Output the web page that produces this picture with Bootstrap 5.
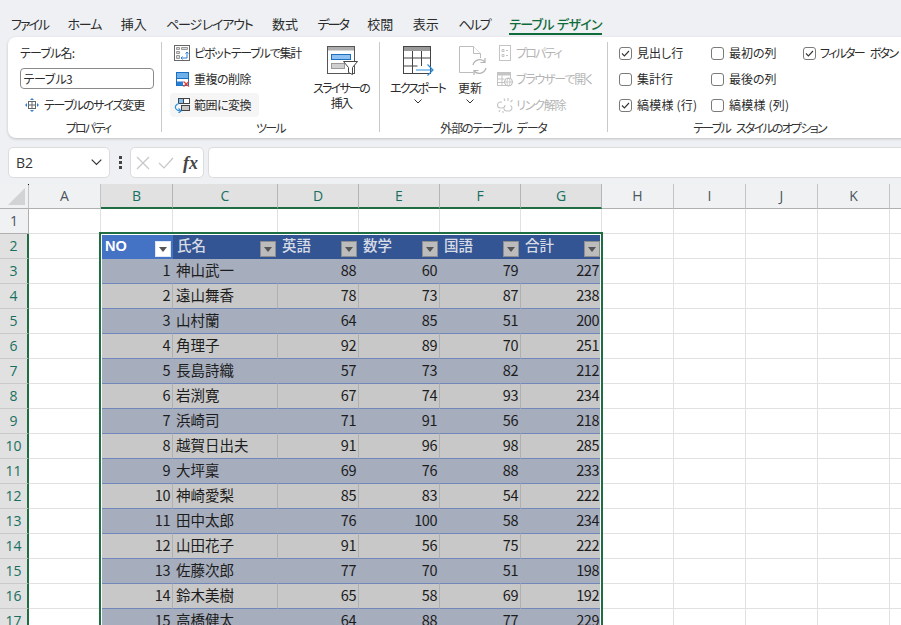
<!DOCTYPE html>
<html lang="ja">
<head>
<meta charset="utf-8">
<title>テーブル デザイン</title>
<link href="https://cdn.jsdelivr.net/npm/bootstrap@5.3.0/dist/css/bootstrap.min.css" rel="stylesheet">
<style>
html,body{height:625px;overflow:hidden}
body{background:#eef0f3;color:#2b2b2b;font-family:"Noto Sans CJK JP","Liberation Sans",sans-serif;font-size:12px;font-feature-settings:"palt";width:901px}
.xs1{letter-spacing:-.5px;word-spacing:3px}.xs2{letter-spacing:-1.2px;word-spacing:4px}.xs3{letter-spacing:-1.75px;word-spacing:5px}.xs4{letter-spacing:-2px}
.xt1{letter-spacing:-1.2px;word-spacing:-1px}.xt2{letter-spacing:-.7px;word-spacing:1px}
.xtabs{height:37px;padding:14px 0 0 11px;gap:19.5px;flex-wrap:nowrap;font-size:13px;line-height:20px}
.xtabs .nav-link{padding:0;color:#2b2b2b;white-space:nowrap;height:20px}
.xtabs .nav-link.active{color:#0e6b3a;font-weight:500;position:relative}
.xtabs .nav-link.active::after{content:"";position:absolute;left:0;right:0;top:19px;height:2px;background:#0e6b3a}
.xribbon{margin-left:8px;width:920px;height:101px;border:0;border-radius:8px;box-shadow:0 1px 3px rgba(0,0,0,.2);flex-direction:row}
.xg{flex:none;display:flex;flex-direction:column}
.xg1{width:153px}.xg2{width:217px}.xg3{width:227px}.xg4{width:300px}
.xgbody{height:82px;padding-top:3px;display:flex}
.xglabel{height:19px;line-height:18px;text-align:center;color:#333}
.xg1 .xglabel{padding-left:7px}
.xg4 .xglabel{width:303px}
.xsep{flex:none;width:1px;height:90px;margin-top:5px;background:#c9c9c9}
.xrow{height:26px;display:flex;align-items:center;gap:4px;white-space:nowrap;line-height:16px}
.xrow svg{flex:none}
.xoffrow{gap:3px}
.xhov{background:#f5f5f5;border-radius:4px;height:24px;margin:1px 0;padding:0 8px 0 4px;align-self:flex-start}
.xoff{color:#b4b4b4;margin-left:7px}
.xg1 .xgbody{flex-direction:column;padding-left:12px}
.xname{height:21px;width:134px;padding:0 2px;font-size:12px;line-height:18px;border:1px solid #8a8a8a;border-radius:4px;color:#2b2b2b;min-height:0;margin:3px 0;font-family:inherit;letter-spacing:-1.1px}
.xlabel1{height:25px;line-height:26px;letter-spacing:-.8px}
.xcol1{width:150px;padding-left:8px}
.xcol2{width:58px}
.xcol3{width:55px}
.xcol4{width:40px;margin-left:5px}
.xg3 .xgbody{padding-left:10px}
.xg4 .xgbody{padding-left:11px}
.xccol{width:92px}
.xbig{display:flex;flex-direction:column;align-items:center;padding-top:6px;line-height:15px;text-align:center;flex:none;white-space:nowrap}
.xbig svg{flex:none;margin-bottom:4px}
.xchev{margin-top:4px}
.xcheck{display:flex;align-items:center;gap:5px;height:26px;margin:0;padding:0;min-height:0;white-space:nowrap}
.xcheck .form-check-input{float:none;margin:0;width:13px;height:13px;flex:none;border:1px solid #7a7a7a;border-radius:3px;background-color:#fff}
.xcheck .form-check-input:checked{background-color:#fff;border-color:#7a7a7a;background-image:url("data:image/svg+xml,%3Csvg xmlns='http://www.w3.org/2000/svg' viewBox='0 0 13 13'%3E%3Cpath d='M3 6.5l2.4 2.4L10 4' fill='none' stroke='%23333' stroke-width='1.1'/%3E%3C/svg%3E");background-size:13px 13px}
.xwide{letter-spacing:.2px}
.xfbar{height:31px;margin:9px 0 6px 8px}
.xbox{background:#fff;border:1px solid #dcdcdc;border-radius:5px;height:31px;flex:none}
.xnamebox{width:102px;padding:0 7px;font-family:"Open Sans","Liberation Sans",sans-serif;font-size:14px;color:#333;line-height:29px}
.xdots{width:20px;flex:none}
.xfx{width:74px;padding:0 5px}
.xfxt{font-family:"Liberation Serif",serif;font-style:italic;font-weight:700;font-size:18px;color:#444;line-height:28px;margin-left:auto}
.xinput{width:720px;border-right:0;margin-left:4px}
.xsheetwrap{position:relative;height:441px;overflow:hidden;background:#fff}
.xsheet{table-layout:fixed;border-collapse:separate;border-spacing:0;width:962px;font-size:14.5px;line-height:20px}
.xsheet td,.xsheet th{height:25px;padding:0;border-right:1px solid #e1e1e1;border-bottom:1px solid #e1e1e1;font-weight:400;overflow:hidden;white-space:nowrap}
.xsheet thead th,.xsheet tbody th{background:#f0f1f2;text-align:center;font-family:"Open Sans","Liberation Sans",sans-serif;font-size:14px;color:#4a5560;border-right-color:#d0d0d0;border-bottom-color:#c9c9c9}
.xsheet thead th{border-bottom-color:#b0b0b0;border-right-color:#c4c4c4}
.xsheet thead th.xsel{background:#e1e1e1;color:#17705f;border-bottom:2px solid #1f6e43;border-right-color:#b5b5b5}
.xsheet tbody th.xsel{background:#e1e1e1;color:#17705f;border-right:2px solid #1f6e43}
.xsheet tbody tr:first-child th{border-bottom-color:#b0b0b0}
.xsheet tbody th{border-right-color:#b0b0b0}
.xsheet .xhead{background:#335593;color:#d6dbe6;font-weight:500;padding:0 0 2px 4px;position:relative;border-color:#335593;vertical-align:middle}
.xsheet .xhead.xno{background:#4472c4;color:#fff;font-weight:700;font-family:"Liberation Sans",sans-serif;border-color:#4472c4;padding-bottom:0}
.xflt{position:absolute;right:1px;bottom:1px;width:16px;height:16px;background:#bcbcbc;border:1px solid #8e8e8e;display:flex;align-items:center;justify-content:center}
.xno .xflt{background:#fff;border-color:#dfe6f5}
.xflt::after{content:"";border:4px solid transparent;border-top:5px solid #555;border-bottom:0}
.xa td{background:#a6adbc;border-right-color:#a6adbc;border-bottom-color:#7288bb}
.xb td{background:#c8c8c8;border-right-color:#b0b0b0;border-bottom-color:#7288bb}
.xa td.bg-white,.xb td.bg-white{border-right-color:#e1e1e1;border-bottom-color:#e1e1e1}
.xsheet .xnum{text-align:right;padding:0 2px 2px 0;letter-spacing:-.45px;color:#1c1c1c}
.xsheet .xtxt{padding:0 0 2px 3px;color:#1c1c1c}
.xframe{position:absolute;left:99px;top:48px;width:504px;height:420px;border:2px solid #1f6e43;box-shadow:inset 0 0 0 1px #fff;pointer-events:none}
.xcorner{position:absolute;left:0;top:0}
</style>
</head>
<body>
<ul class="nav xtabs">
<li class="nav-item"><a class="nav-link xs4" href="#">ファイル</a></li>
<li class="nav-item"><a class="nav-link xs2" href="#">ホーム</a></li>
<li class="nav-item"><a class="nav-link" href="#">挿入</a></li>
<li class="nav-item"><a class="nav-link xt1" href="#">ページ レイアウト</a></li>
<li class="nav-item"><a class="nav-link" href="#">数式</a></li>
<li class="nav-item"><a class="nav-link xs4" href="#">データ</a></li>
<li class="nav-item"><a class="nav-link" href="#">校閲</a></li>
<li class="nav-item"><a class="nav-link" href="#">表示</a></li>
<li class="nav-item"><a class="nav-link xs4" href="#">ヘルプ</a></li>
<li class="nav-item"><a class="nav-link active xt2" href="#">テーブル デザイン</a></li>
</ul>

<div class="card xribbon">
  <div class="xg xg1">
    <div class="xgbody">
      <div class="xlabel1">テーブル名:</div>
      <input class="form-control xname" value="テーブル3">
      <div class="xrow">
        <svg class="ms-1" width="16" height="16" viewBox="0 0 16 16"><rect x="4.500" y="4.500" width="7" height="7" fill="#fff" stroke="#666"/><path d="M4.500 8h7M8 4.500v7" stroke="#666"/><path d="M8 1l2 2H6zM8 15l2-2H6zM1 8l2-2v4zM15 8l-2-2v4z" fill="#2b7cd3"/></svg>
        <span class="xs2">テーブルのサイズ変更</span>
      </div>
    </div>
    <div class="xglabel xs3">プロパティ</div>
  </div>
  <div class="xsep"></div>
  <div class="xg xg2">
    <div class="xgbody">
      <div class="d-flex flex-column xcol1">
        <div class="xrow ps-1">
          <svg width="16" height="16" viewBox="0 0 16 16"><rect x=".5" y=".5" width="15" height="15" fill="#fff" stroke="#666"/><path d="M2.500 2.500h3v2h-3zM7.500 2.500h6v2h-6zM2.500 6.500h3v2h-3zM2.500 10.500h3v3h-3z" fill="#d8d8d8" stroke="#999"/><path d="M7 13h6V7M11.500 8.500L13 7l1.500 1.500M8.500 11.500L7 13l1.500 1.500" fill="none" stroke="#2b7cd3"/></svg>
          <span class="xs2">ピボットテーブルで集計</span>
        </div>
        <div class="xrow ps-1">
          <svg width="16" height="16" viewBox="0 0 16 16"><rect x="2.500" y="1.500" width="12" height="13" fill="#fff" stroke="#1b6fc0"/><rect x="3" y="2" width="11" height="5.500" fill="#6fb0ea"/><path d="M2.500 7.500h12" stroke="#1b6fc0"/><rect x="3" y="10.500" width="6" height="4" fill="#2b7cd3"/><path d="M9.500 10.500l5.500 5M15 10.500l-5.500 5" stroke="#e0433c" stroke-width="1.300" fill="none"/></svg>
          <span class="xs1">重複の削除</span>
        </div>
        <div class="xrow xhov">
          <svg width="16" height="16" viewBox="0 0 16 16"><rect x="4.500" y="1.500" width="5" height="5" fill="#7fbbee" stroke="#444"/><rect x="9.500" y="1.500" width="6" height="5" fill="#fff" stroke="#444"/><rect x="7.500" y="8.500" width="8" height="5" fill="#c8c8c8" stroke="#444"/><path d="M5 6.500C1.500 7.500.5 10 2 12c1 1.500 3 2 5 2" fill="none" stroke="#2b8fdc" stroke-width="1.200"/><path d="M4.500 11.500L7 14l-2.500 2" fill="none" stroke="#2b8fdc" stroke-width="1.200"/></svg>
          <span class="xs1">範囲に変換</span>
        </div>
      </div>
      <div class="xbig xcol2">
        <svg class="ms-1" width="32" height="30" viewBox="0 0 32 30"><rect x=".500" y=".500" width="27" height="27" fill="#fff" stroke="#555"/><rect x="1" y="1" width="26" height="3.500" fill="#adadad"/><rect x="4.500" y="8.500" width="19" height="5" fill="#8fc2f0" stroke="#1b6fc0"/><rect x="4.500" y="17.500" width="13" height="5" fill="#cfcfcf" stroke="#9a9a9a"/><path d="M16.500 15.500h14l-5 6v7l-4-2v-5z" fill="#fff" stroke="#444"/></svg>
        <span class="xs3">スライサーの<br>挿入</span>
      </div>
    </div>
    <div class="xglabel xs3">ツール</div>
  </div>
  <div class="xsep"></div>
  <div class="xg xg3">
    <div class="xgbody">
      <div class="xbig xcol3">
        <svg width="32" height="30" viewBox="0 0 32 30"><rect x="1.500" y=".500" width="27" height="27" fill="#fff" stroke="#444"/><rect x="2" y="1" width="26" height="4" fill="#9a9a9a"/><path d="M1.500 12h27M1.500 20h14M10.500 5v22M19.500 5v15" stroke="#444" fill="none"/><path d="M14 24h17M25.500 18.500L31 24l-5.500 5.500" fill="none" stroke="#2b8fdc" stroke-width="1.200"/></svg>
        <span class="xs3">エクスポート</span>
        <svg class="xchev" width="8" height="5" viewBox="0 0 8 5"><path d="M.5.500L4 4 7.500.500" fill="none" stroke="#333"/></svg>
      </div>
      <div class="xbig xcol4">
        <svg class="ms-2" width="30" height="30" viewBox="0 0 30 30"><path d="M.500.500h14l7 7v19H.500z" fill="#fff" stroke="#bdbdbd"/><path d="M14.500.500v7h7" fill="#fff" stroke="#bdbdbd"/><circle cx="20.500" cy="20.500" r="8.500" fill="#fff"/><path d="M14 19a7 7 0 0 1 12-3M27 22a7 7 0 0 1-12 3M26 12v4.500h-4.500M15 29v-4.500h4.500" fill="none" stroke="#b4b4b4" stroke-width="1.200"/></svg>
        <span>更新</span>
        <svg class="xchev" width="8" height="5" viewBox="0 0 8 5"><path d="M.5.500L4 4 7.500.500" fill="none" stroke="#333"/></svg>
      </div>
      <div class="d-flex flex-column xoff">
        <div class="xrow xoffrow">
          <svg width="16" height="16" viewBox="0 0 16 16"><rect x="2.500" y=".500" width="11" height="15" fill="#fff" stroke="#c4c4c4"/><path d="M5 4.500h2v2H5zM5 9.500h2v2H5zM9 5.500h2M9 10.500h2" fill="none" stroke="#c4c4c4"/></svg>
          <span class="xs3">プロパティ</span>
        </div>
        <div class="xrow xoffrow">
          <svg width="16" height="16" viewBox="0 0 16 16"><rect x=".500" y="1.500" width="13" height="13" fill="#fff" stroke="#c4c4c4"/><rect x="1" y="2" width="12" height="2.500" fill="#c4c4c4"/><path d="M.500 8h7M.500 11.500h7M5 4.500v10" stroke="#c4c4c4"/><circle cx="11.500" cy="11" r="4" fill="#fff" stroke="#b8b8b8"/><path d="M7.500 11h8M11.500 7c-2 2-2 6 0 8M11.500 7c2 2 2 6 0 8" fill="none" stroke="#b8b8b8" stroke-width=".7"/></svg>
          <span class="xs2">ブラウザーで開く</span>
        </div>
        <div class="xrow xoffrow">
          <svg width="16" height="16" viewBox="0 0 16 16"><path d="M5 5H3.500a3 3 0 0 0 0 6H5c2 0 3-1.500 3-3M7 11.500c0 1.500 1.500 2.500 3 2.500h1.500a3 3 0 0 0 2-5.500M11 4V1M13.500 5l2-2M8 4L7 1.500M3 13l-1 2M6 14v2" fill="none" stroke="#c4c4c4" stroke-width="1.100"/></svg>
          <span class="xs2">リンク解除</span>
        </div>
      </div>
    </div>
    <div class="xglabel xs2">外部のテーブル データ</div>
  </div>
  <div class="xsep"></div>
  <div class="xg xg4">
    <div class="xgbody">
      <div class="xccol">
        <div class="form-check xcheck"><input class="form-check-input" type="checkbox" checked id="c1"><label class="form-check-label" for="c1">見出し行</label></div>
        <div class="form-check xcheck"><input class="form-check-input" type="checkbox" id="c2"><label class="form-check-label" for="c2">集計行</label></div>
        <div class="form-check xcheck"><input class="form-check-input" type="checkbox" checked id="c3"><label class="form-check-label xwide" for="c3">縞模様 (行)</label></div>
      </div>
      <div class="xccol">
        <div class="form-check xcheck"><input class="form-check-input" type="checkbox" id="c4"><label class="form-check-label" for="c4">最初の列</label></div>
        <div class="form-check xcheck"><input class="form-check-input" type="checkbox" id="c5"><label class="form-check-label" for="c5">最後の列</label></div>
        <div class="form-check xcheck"><input class="form-check-input" type="checkbox" id="c6"><label class="form-check-label xwide" for="c6">縞模様 (列)</label></div>
      </div>
      <div>
        <div class="form-check xcheck gap-1"><input class="form-check-input" type="checkbox" checked id="c7"><label class="form-check-label xs3" for="c7">フィルター ボタン</label></div>
      </div>
    </div>
    <div class="xglabel xs3">テーブル スタイルのオプション</div>
  </div>
</div>

<div class="d-flex xfbar">
  <div class="xbox xnamebox d-flex justify-content-between align-items-center"><span>B2</span>
    <svg width="11" height="7" viewBox="0 0 11 7"><path d="M.7.700L5.500 5.500 10.300.700" fill="none" stroke="#333" stroke-width="1.200"/></svg></div>
  <div class="xdots d-flex align-items-center justify-content-center"><svg width="3" height="13" viewBox="0 0 3 13"><path d="M0 0h3v3H0zM0 5h3v3H0zM0 10h3v3H0z" fill="#444"/></svg></div>
  <div class="xbox xfx d-flex align-items-center gap-2">
    <svg width="14" height="14" viewBox="0 0 14 14"><path d="M1 1l12 12M13 1L1 13" stroke="#c6c6c6" stroke-width="1.200"/></svg>
    <svg width="16" height="14" viewBox="0 0 16 14"><path d="M1 7l5 5L15 2" fill="none" stroke="#c6c6c6" stroke-width="1.200"/></svg>
    <span class="xfxt">fx</span>
  </div>
  <div class="xbox xinput"></div>
</div>

<div class="xsheetwrap">
<table class="xsheet">
<colgroup><col style="width:29px"><col style="width:72px"><col style="width:72px"><col style="width:105px"><col style="width:81px"><col style="width:81px"><col style="width:81px"><col style="width:81px"><col style="width:72px"><col style="width:72px"><col style="width:72px"><col style="width:72px"><col style="width:72px"></colgroup>
<thead><tr><th></th><th>A</th><th class="xsel">B</th><th class="xsel">C</th><th class="xsel">D</th><th class="xsel">E</th><th class="xsel">F</th><th class="xsel">G</th><th>H</th><th>I</th><th>J</th><th>K</th><th>L</th></tr></thead>
<tbody>
<tr><th>1</th><td></td><td></td><td></td><td></td><td></td><td></td><td></td><td></td><td></td><td></td><td></td><td></td></tr>
<tr><th class="xsel">2</th><td></td><td class="xhead xno">NO<span class="xflt"></span></td><td class="xhead">氏名<span class="xflt"></span></td><td class="xhead">英語<span class="xflt"></span></td><td class="xhead">数学<span class="xflt"></span></td><td class="xhead">国語<span class="xflt"></span></td><td class="xhead">合計<span class="xflt"></span></td><td></td><td></td><td></td><td></td><td></td></tr>
<tr class="xa"><th class="xsel">3</th><td class="bg-white"></td><td class="xnum">1</td><td class="xtxt">神山武一</td><td class="xnum">88</td><td class="xnum">60</td><td class="xnum">79</td><td class="xnum">227</td><td class="bg-white"></td><td class="bg-white"></td><td class="bg-white"></td><td class="bg-white"></td><td class="bg-white"></td></tr>
<tr class="xb"><th class="xsel">4</th><td class="bg-white"></td><td class="xnum">2</td><td class="xtxt">遠山舞香</td><td class="xnum">78</td><td class="xnum">73</td><td class="xnum">87</td><td class="xnum">238</td><td class="bg-white"></td><td class="bg-white"></td><td class="bg-white"></td><td class="bg-white"></td><td class="bg-white"></td></tr>
<tr class="xa"><th class="xsel">5</th><td class="bg-white"></td><td class="xnum">3</td><td class="xtxt">山村蘭</td><td class="xnum">64</td><td class="xnum">85</td><td class="xnum">51</td><td class="xnum">200</td><td class="bg-white"></td><td class="bg-white"></td><td class="bg-white"></td><td class="bg-white"></td><td class="bg-white"></td></tr>
<tr class="xb"><th class="xsel">6</th><td class="bg-white"></td><td class="xnum">4</td><td class="xtxt">角理子</td><td class="xnum">92</td><td class="xnum">89</td><td class="xnum">70</td><td class="xnum">251</td><td class="bg-white"></td><td class="bg-white"></td><td class="bg-white"></td><td class="bg-white"></td><td class="bg-white"></td></tr>
<tr class="xa"><th class="xsel">7</th><td class="bg-white"></td><td class="xnum">5</td><td class="xtxt">長島詩織</td><td class="xnum">57</td><td class="xnum">73</td><td class="xnum">82</td><td class="xnum">212</td><td class="bg-white"></td><td class="bg-white"></td><td class="bg-white"></td><td class="bg-white"></td><td class="bg-white"></td></tr>
<tr class="xb"><th class="xsel">8</th><td class="bg-white"></td><td class="xnum">6</td><td class="xtxt">岩渕寛</td><td class="xnum">67</td><td class="xnum">74</td><td class="xnum">93</td><td class="xnum">234</td><td class="bg-white"></td><td class="bg-white"></td><td class="bg-white"></td><td class="bg-white"></td><td class="bg-white"></td></tr>
<tr class="xa"><th class="xsel">9</th><td class="bg-white"></td><td class="xnum">7</td><td class="xtxt">浜崎司</td><td class="xnum">71</td><td class="xnum">91</td><td class="xnum">56</td><td class="xnum">218</td><td class="bg-white"></td><td class="bg-white"></td><td class="bg-white"></td><td class="bg-white"></td><td class="bg-white"></td></tr>
<tr class="xb"><th class="xsel">10</th><td class="bg-white"></td><td class="xnum">8</td><td class="xtxt">越賀日出夫</td><td class="xnum">91</td><td class="xnum">96</td><td class="xnum">98</td><td class="xnum">285</td><td class="bg-white"></td><td class="bg-white"></td><td class="bg-white"></td><td class="bg-white"></td><td class="bg-white"></td></tr>
<tr class="xa"><th class="xsel">11</th><td class="bg-white"></td><td class="xnum">9</td><td class="xtxt">大坪稟</td><td class="xnum">69</td><td class="xnum">76</td><td class="xnum">88</td><td class="xnum">233</td><td class="bg-white"></td><td class="bg-white"></td><td class="bg-white"></td><td class="bg-white"></td><td class="bg-white"></td></tr>
<tr class="xb"><th class="xsel">12</th><td class="bg-white"></td><td class="xnum">10</td><td class="xtxt">神崎愛梨</td><td class="xnum">85</td><td class="xnum">83</td><td class="xnum">54</td><td class="xnum">222</td><td class="bg-white"></td><td class="bg-white"></td><td class="bg-white"></td><td class="bg-white"></td><td class="bg-white"></td></tr>
<tr class="xa"><th class="xsel">13</th><td class="bg-white"></td><td class="xnum">11</td><td class="xtxt">田中太郎</td><td class="xnum">76</td><td class="xnum">100</td><td class="xnum">58</td><td class="xnum">234</td><td class="bg-white"></td><td class="bg-white"></td><td class="bg-white"></td><td class="bg-white"></td><td class="bg-white"></td></tr>
<tr class="xb"><th class="xsel">14</th><td class="bg-white"></td><td class="xnum">12</td><td class="xtxt">山田花子</td><td class="xnum">91</td><td class="xnum">56</td><td class="xnum">75</td><td class="xnum">222</td><td class="bg-white"></td><td class="bg-white"></td><td class="bg-white"></td><td class="bg-white"></td><td class="bg-white"></td></tr>
<tr class="xa"><th class="xsel">15</th><td class="bg-white"></td><td class="xnum">13</td><td class="xtxt">佐藤次郎</td><td class="xnum">77</td><td class="xnum">70</td><td class="xnum">51</td><td class="xnum">198</td><td class="bg-white"></td><td class="bg-white"></td><td class="bg-white"></td><td class="bg-white"></td><td class="bg-white"></td></tr>
<tr class="xb"><th class="xsel">16</th><td class="bg-white"></td><td class="xnum">14</td><td class="xtxt">鈴木美樹</td><td class="xnum">65</td><td class="xnum">58</td><td class="xnum">69</td><td class="xnum">192</td><td class="bg-white"></td><td class="bg-white"></td><td class="bg-white"></td><td class="bg-white"></td><td class="bg-white"></td></tr>
<tr class="xa"><th class="xsel">17</th><td class="bg-white"></td><td class="xnum">15</td><td class="xtxt">高橋健太</td><td class="xnum">64</td><td class="xnum">88</td><td class="xnum">77</td><td class="xnum">229</td><td class="bg-white"></td><td class="bg-white"></td><td class="bg-white"></td><td class="bg-white"></td><td class="bg-white"></td></tr>
</tbody>
</table>
<svg class="xcorner" width="29" height="25" viewBox="0 0 29 25"><path d="M25 4v17H8z" fill="#d2d3d4"/><rect x="28" y="0" width="1" height="1" fill="#111"/></svg>
<div class="xframe"></div>
</div>
<script src="https://cdn.jsdelivr.net/npm/bootstrap@5.3.0/dist/js/bootstrap.bundle.min.js"></script>
</body>
</html>
